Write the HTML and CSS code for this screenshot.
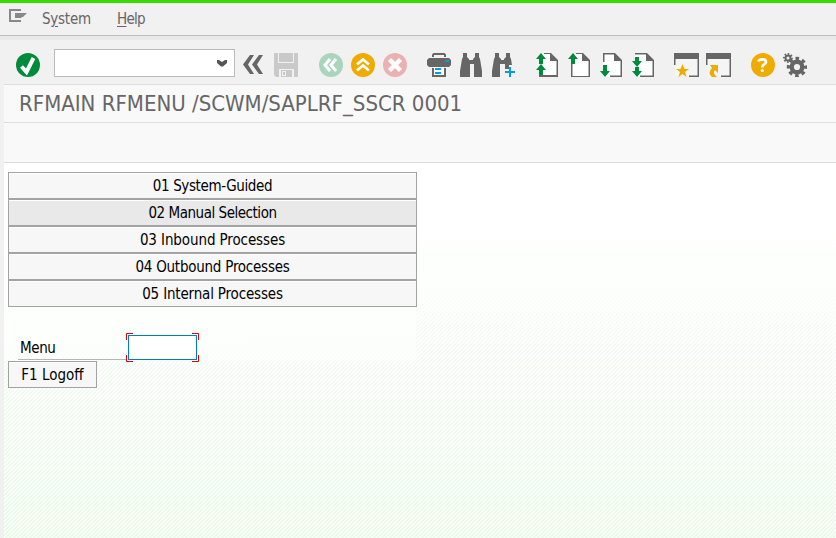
FILE: index.html
```
<!DOCTYPE html>
<html lang="en">
<head>
<meta charset="utf-8">
<title>RFMAIN RFMENU</title>
<link rel="stylesheet" href="styles.css">
</head>
<body>
<nav class="menubar">
  <svg class="menu-icon" width="18" height="14" viewBox="0 0 18 14"><path d="M12 1H1v11h11" fill="none" stroke="#888" stroke-width="2"/><path d="M6 4h12l-4 4h-1l-1 1H6z" fill="#888"/></svg>
  <span class="menu-system">S<u>y</u>stem</span>
  <span class="menu-help"><u>H</u>elp</span>
</nav>
<div class="frame">
  <div class="toolbar">
    <svg class="icon" viewBox="0 0 24 24"><circle cx="12" cy="12" r="12" fill="#008a3b"/><path d="M5.5 13.5l5 5.5L17.500 5" fill="none" stroke="#fff" stroke-width="4"/></svg>
    <div class="command"><svg width="10" height="7" viewBox="0 0 10 7"><path d="M0 0h2l3 2 3-2h2v3L6 6.500H4L0 3z" fill="#555"/></svg></div>
    <div class="group group-save">
      <svg class="icon" viewBox="0 0 24 24"><path d="M12 2h-4L1 11.500l7 9.500h4L6 11.500zM21 2h-4l-7 9.500L17 21h4l-6-9.500z" fill="#666"/></svg>
      <svg class="icon" viewBox="0 0 24 24"><path d="M0 0h4v10h16V0h4v24h-4v-8H5v8H2l-2-2z" fill="#c9c9c9"/><path d="M5 0h14v9H5zM7 17h11v7H7z" fill="#c9c9c9"/><path d="M8 18h4v5H8z" fill="#f1f1f1"/><path d="M9 19h2v3H9z" fill="#c9c9c9"/></svg>
    </div>
    <div class="group group-nav">
      <svg class="icon" viewBox="0 0 24 24"><circle cx="12" cy="12" r="12" fill="#a9d5bc"/><path d="M11 6l-5 6 5 6M17 6l-5 6 5 6" fill="none" stroke="#fff" stroke-width="3"/></svg>
      <svg class="icon" viewBox="0 0 24 24"><circle cx="12" cy="12" r="12" fill="#f0ab00"/><path d="M6 11.500l6-5 6 5M6 17.500l6-5 6 5" fill="none" stroke="#fff" stroke-width="2.800"/></svg>
      <svg class="icon" viewBox="0 0 24 24"><circle cx="12" cy="12" r="12" fill="#ebb1b1"/><path d="M6.500 6.500l11 11M17.500 6.500l-11 11" stroke="#fff" stroke-width="4.500"/></svg>
    </div>
    <div class="group group-find">
      <svg class="icon" viewBox="0 0 24 24"><path d="M5 4V1.500L6.500 0h11L19 1.500V4h-2V2H7v2zM2 5h20l2 2v5l-2 2H2l-2-2V7zM5 15h2v7h10v-7h2v9H5z" fill="#666"/><path d="M7 14h10v8H7z" fill="#fff"/><path d="M18 7h4v2h-4zM8 15h6v2H8zM8 19h6v2H8z" fill="#009de0"/></svg>
      <svg class="icon" viewBox="0 0 24 24"><path d="M4 0h4v4l2 2v1h4V6l2-2V0h4v4l1 2 2 12v6h-8V11h-4v13H1v-6L3 6l1-2z" fill="#666"/></svg>
      <svg class="icon" viewBox="0 0 24 24"><path d="M4 0h4v4l2 2v1h3V6l2-2V0h4v4l1 2 1 6h-3v4h-4v-5h-5v13H1v-6L3 6l1-2z" fill="#666"/><path d="M18 14h2v4h4v2h-4v4h-2v-4h-4v-2h4z" fill="#009de0"/></svg>
    </div>
    <div class="group group-page">
      <svg class="icon" viewBox="0 0 24 24"><path d="M5 0h10l7 7v17H4V13h1z" fill="#fff"/><path d="M8 0h7l7 7v17H3v-2h17.500V8H14V1H8z" fill="#666"/><path d="M5 0l5 6H7v5H3V6H0zM5 11l5 6H7v5H3v-5H0z" fill="#008a3b"/></svg>
      <svg class="icon" viewBox="0 0 24 24"><path d="M3 1h12l7 7v16H3z" fill="#fff"/><path d="M8 0h7l7 7v17H3V11h1.500v12h16V8H14V1H8z" fill="#666"/><path d="M5 0l5 6H7v5H3V6H0z" fill="#008a3b"/></svg>
      <svg class="icon" viewBox="0 0 24 24"><path d="M3 0h12l7 7v17H3z" fill="#fff"/><path d="M3 0h12l7 7v17H10v-1.500h10.500V8H14V1.500H4.500V9H3z" fill="#666"/><path d="M3 12h4v6h3l-5 6-5-6h3z" fill="#008a3b"/></svg>
      <svg class="icon" viewBox="0 0 24 24"><path d="M3 0h12l7 7v17H3z" fill="#fff"/><path d="M3 0h12l7 7v17H8v-1.500h12.500V8H14V1.500H3z" fill="#666"/><path d="M3 4h4v4h3l-5 6-5-6h3zM3 14h4v4h3l-5 6-5-6h3z" fill="#008a3b"/></svg>
    </div>
    <div class="group group-window">
      <svg class="icon wide" viewBox="0 0 25 24"><path d="M1 6h23v17H1z" fill="#f5f5f5"/><path d="M0 0h25v24H15v-1.500h8.500V6h-22v6H0z" fill="#666"/><path d="M8.500 11l2 5H15l-4 3 1.500 5-4-3-4 3L6 19l-4-3h4.500z" fill="#f0ab00"/></svg>
      <svg class="icon wide" viewBox="0 0 25 24"><path d="M1 6h23v17H1z" fill="#f5f5f5"/><path d="M0 0h25v24H15v-1.500h8.500V6h-22v6H0z" fill="#666"/><path d="M4 12h8v8l-3-3q-3 3 2 7H6q-5-4 0-9z" fill="#f0ab00"/></svg>
    </div>
    <div class="group group-help">
      <svg class="icon" viewBox="0 0 24 24"><circle cx="12" cy="12" r="12" fill="#f0ab00"/><path d="M7.500 8.500Q8 6.300 11.500 6.300q3.500 0 3.500 2.700 0 1.500-2 2.500-1.700.8-1.700 3" fill="none" stroke="#fff" stroke-width="2.700"/><circle cx="11.300" cy="17.500" r="1.600" fill="#fff"/></svg>
      <svg class="icon" viewBox="0 0 24 24"><g fill="none" stroke="#666"><circle cx="14" cy="14" r="5.300" stroke-width="4.400"/><circle cx="14" cy="14" r="8.500" stroke-width="3.400" stroke-dasharray="3.540 3.136" stroke-dashoffset="1.770"/><circle cx="5" cy="5" r="2.500" stroke-width="2"/><circle cx="5" cy="5" r="4" stroke-width="2" stroke-dasharray="1.570 1.571" stroke-dashoffset=".78"/></g></svg>
    </div>
  </div>
  <h1 class="title"><span>RFMAIN RFMENU /SCWM/SAPLRF_SSCR 0001</span></h1>
  <div class="appbar"></div>
  <main class="canvas">
    <div class="panel">
      <div class="buttons">
        <button class="btn"><span class="t1">01 System-Guided</span></button>
        <button class="btn active"><span class="t2">02 Manual Selection</span></button>
        <button class="btn"><span class="t3">03 Inbound Processes</span></button>
        <button class="btn"><span class="t4">04 Outbound Processes</span></button>
        <button class="btn"><span class="t5">05 Internal Processes</span></button>
      </div>
      <div class="field">
        <label class="label" for="menu">Menu</label>
        <div class="focus">
          <input id="menu" class="input">
          <svg class="corners" width="73" height="29" viewBox="0 0 73 29"><path d="M7 .5H.5V7M66 .5h6.500V7M72.500 22v6.500H66M7 28.500H.5V22" fill="none" stroke="#d90000"/></svg>
        </div>
      </div>
    </div>
    <button class="btn logoff">F1 Logoff</button>
  </main>
</div>
</body>
</html>
```
FILE: styles.css
```
* { box-sizing: border-box; }
body {
  margin: 0;
  height: 538px;
  overflow: hidden;
  display: flex;
  flex-direction: column;
  border-top: 3px solid #38dc00;
  background: #f1f1f1;
  font-family: "DejaVu Sans Condensed", "DejaVu Sans", sans-serif;
  font-stretch: condensed;
  font-size: 15px;
  color: #000;
}
svg { display: block; flex: none; }
.menubar {
  height: 33px;
  flex: none;
  display: flex;
  align-items: flex-start;
  padding: 6px 0 0 9px;
  border-bottom: 1px solid #bdbdbd;
  color: #666;
  line-height: 20px;
}
.menu-icon { width: 18px; height: 14px; }
.menu-system { width: 75px; margin-left: 15px; letter-spacing: -0.25px; }
.menu-help { letter-spacing: -0.7px; }
.menubar u { text-underline-offset: 2px; }
.frame {
  flex: 1;
  display: flex;
  flex-direction: column;
  padding-left: 4px;
  border-top: 4px solid #e9e9e9;
}
.toolbar {
  height: 45px;
  flex: none;
  display: flex;
  align-items: flex-start;
  padding: 13px 0 0 12px;
  border-bottom: 1px solid #dedede;
}
.icon { width: 24px; height: 24px; }
.icon.wide { width: 25px; }
.command {
  width: 181px;
  height: 28px;
  margin: -4px 0 0 14px;
  padding: 10px 7px 0 0;
  display: flex;
  justify-content: flex-end;
  border: 1px solid #bcbcbc;
  background: #fff;
}
.group { display: flex; gap: 8px; }
.group-save { margin-left: 7px; }
.group-nav { margin-left: 21px; }
.group-find { margin-left: 20px; }
.group-page { margin-left: 21px; }
.group-window { gap: 7px; margin-left: 18px; }
.group-help { margin-left: 20px; }
.title {
  height: 38px;
  flex: none;
  margin: 0;
  padding-left: 15px;
  border-bottom: 1px solid #dedede;
  background: #f9f9f9;
  color: #666;
  font-size: 22px;
  font-weight: 400;
  line-height: 38px;
  white-space: nowrap;
}
.appbar {
  height: 40px;
  flex: none;
  border-bottom: 1px solid #dedede;
  background: #f9f9f9;
}
.canvas {
  flex: 1;
  background:
    linear-gradient(#fff 0%, rgba(255,255,255,.96) 18%, rgba(255,255,255,.5) 55%, rgba(255,255,255,.1) 100%),
    repeating-linear-gradient(135deg, #e6f9e4 0, #e6f9e4 1.414px, #fdfffd 1.414px, #fdfffd 2.828px);
}
.panel {
  width: 413px;
  height: 198px;
  padding: 9px 0 0 4px;
  background: rgba(255,255,255,.4);
}
.buttons { display: flex; flex-direction: column; }
.btn {
  height: 27px;
  margin: 0;
  padding: 2px 0 0;
  border: 1px solid #a3a3a3;
  border-radius: 0;
  background: #f7f7f7;
  box-shadow: inset 0 1px #fff;
  color: #000;
  font: inherit;
  letter-spacing: inherit;
  line-height: 23px;
}
.buttons .btn { width: 409px; }
.btn.active { background: #e9e9e9; }
.t1 { letter-spacing: -0.38px; }
.t2 { letter-spacing: -0.47px; }
.t3 { letter-spacing: -0.1px; }
.t4 { letter-spacing: -0.24px; }
.t5 { letter-spacing: -0.17px; }
.field {
  display: flex;
  margin-top: 26px;
  padding-left: 10px;
}
.label {
  width: 108px;
  height: 27px;
  padding-left: 2px;
  line-height: 31px;
  letter-spacing: -0.4px;
  border-bottom: 1px solid #b5b5b5;
}
.focus { position: relative; width: 73px; height: 29px; padding: 2px; }
.input {
  display: block;
  width: 69px;
  height: 25px;
  padding: 0 4px;
  border: 1px solid #007cc0;
  background: #fff;
  outline: none;
  font: inherit;
}
.corners { position: absolute; left: 0; top: 0; }
.logoff { display: block; width: 89px; margin-left: 4px; }
```
